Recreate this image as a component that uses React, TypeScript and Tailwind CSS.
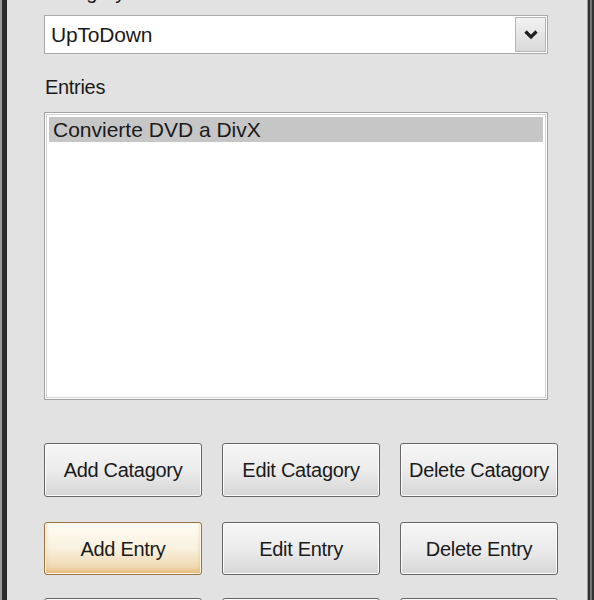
import React from "react";

const font = { fontFamily: '"Liberation Sans", Arial, sans-serif' };

function WinButton({ label, focused = false }: { label: string; focused?: boolean }) {
  return (
    <button
      className={
        focused
          ? "h-full w-[158px] rounded-[3px] border border-[#9a7442] bg-gradient-to-b from-[#fffdf4] via-[#f9f1df] to-[#eccf9f] text-[20px] tracking-[-0.3px] text-[#1a1a1a] shadow-[inset_0_0_0_1px_#fff7e4,inset_0_-3px_4px_#e6b774]"
          : "h-full w-[158px] rounded-[3px] border border-[#666666] bg-gradient-to-b from-[#f6f6f6] via-[#ececec] to-[#d6d6d6] text-[20px] tracking-[-0.3px] text-[#1a1a1a] shadow-[inset_0_0_0_1px_#fbfbfb]"
      }
      style={font}
    >
      {label}
    </button>
  );
}

export default function App() {
  return (
    <div className="flex h-[600px] w-[594px] overflow-hidden bg-[#e2e2e2]" style={font}>
      {/* left window frame */}
      <div className="flex w-[7px] shrink-0">
        <div className="w-[2px] bg-[#9c9c9c]" />
        <div className="w-[5px] bg-[#2e2e2e]" />
      </div>

      <div className="flex w-[580px] flex-col pl-[37px]">
        <div className="-mt-[20px] h-[24px] shrink-0 text-[20px] leading-[24px] text-[#1a1a1a]">Catagory</div>

        {/* category combo box */}
        <div className="mt-[11px] flex h-[39px] w-[504px] shrink-0 border border-[#a9a9a9] bg-white">
          <div className="flex flex-1 items-center pl-[6px] text-[21px] tracking-[-0.2px] text-[#1a1a1a]">UpToDown</div>
          <div className="my-[1px] mr-[1px] flex w-[31px] items-center justify-center border border-[#b5b5b5] bg-gradient-to-b from-[#f2f2f2] to-[#d9d9d9]">
            <svg width="16" height="11" viewBox="0 0 16 11">
              <polyline points="2.5,2.5 8,8 13.5,2.5" fill="none" stroke="#1e1e1e" strokeWidth="3.2" />
            </svg>
          </div>
        </div>

        <div className="mt-[21px] h-[24px] shrink-0 pl-[1px] text-[20px] leading-[24px] tracking-[-0.3px] text-[#1a1a1a]">Entries</div>

        {/* entries list box */}
        <div className="mt-[13px] h-[288px] w-[504px] shrink-0 border border-[#a3a3a3] bg-white p-[1px]">
          <div className="h-full w-full border border-[#d4d4d4] p-[2px]">
            <div className="flex h-[25px] items-center bg-[#c6c6c6] pl-[4px] text-[21px] text-[#1a1a1a]">
              Convierte DVD a DivX
            </div>
          </div>
        </div>

        {/* action buttons */}
        <div className="mt-[43px] flex h-[54px] shrink-0 gap-[20px]">
          <WinButton label="Add Catagory" />
          <WinButton label="Edit Catagory" />
          <WinButton label="Delete Catagory" />
        </div>
        <div className="mt-[25px] flex h-[53px] shrink-0 gap-[20px]">
          <WinButton label="Add Entry" focused />
          <WinButton label="Edit Entry" />
          <WinButton label="Delete Entry" />
        </div>
        <div className="mt-[23px] flex h-[53px] shrink-0 gap-[20px]">
          <WinButton label="" />
          <WinButton label="" />
          <WinButton label="" />
        </div>
      </div>

      {/* right window frame */}
      <div className="flex w-[7px] shrink-0">
        <div className="w-[1px] bg-[#9a9a9a]" />
        <div className="w-[2px] bg-[#333333]" />
        <div className="w-[2px] bg-[#767676]" />
        <div className="w-[2px] bg-[#333333]" />
      </div>
    </div>
  );
}
